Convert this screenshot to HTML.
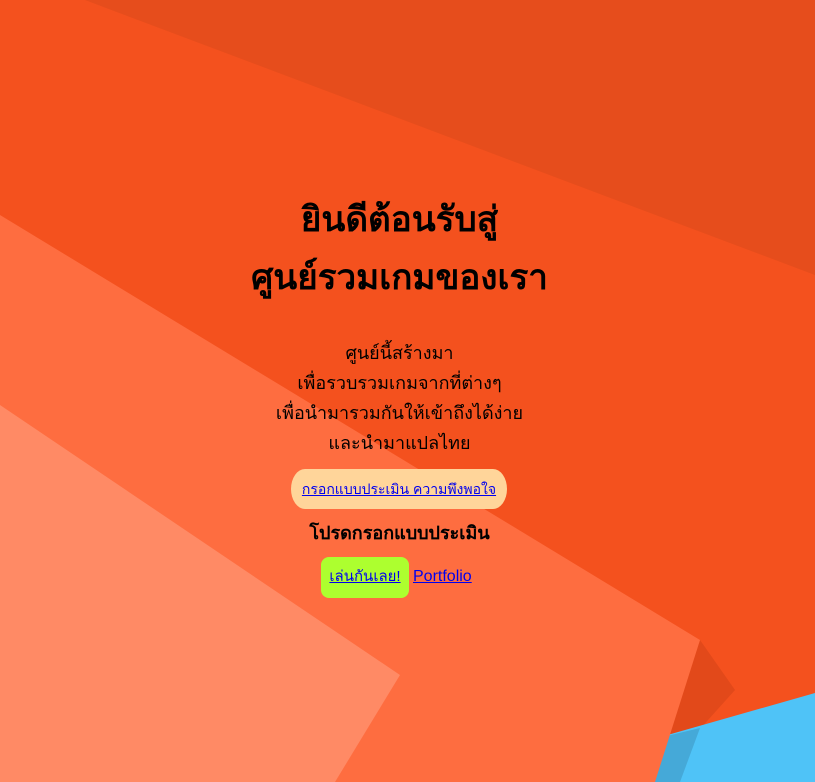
<!DOCTYPE html>
<html><head><meta charset="utf-8"><style>
html,body{margin:0;padding:0;width:815px;height:782px;overflow:hidden;font-family:"Liberation Sans","Noto Sans CJK SC",sans-serif;}
svg.bg{position:absolute;left:0;top:0}
.c{position:absolute;left:0;width:799px;text-align:center;color:#000}
h1{margin:0;font-size:35px;font-weight:bold;line-height:58px}
.p{font-size:18px;line-height:30px}
a{color:#00e;text-decoration:underline}
.b1{position:absolute;left:291px;top:469px;width:216px;height:40px;background:#ffd59a;border-radius:14px/20px;font-size:14px;line-height:40px;text-align:center}
.b2{position:absolute;left:321px;top:557px;width:88px;height:41px;background:#adff2f;border-radius:8px;font-size:15px;line-height:40px;text-align:center}
</style></head><body>
<svg class="bg" width="815" height="782">
<rect width="815" height="782" fill="#f4511e"/>
<polygon points="85,0 815,0 815,275" fill="#e64d1c"/>
<polygon points="700,640 735,690 690,740 660,760" fill="#e2491a"/>
<polygon points="650,740 815,693 815,782 640,782" fill="#4fc3f7"/>
<polygon points="650,740 700,728 680,782 640,782" fill="#45a9d8"/>
<polygon points="0,215 700,640 655,782 0,782" fill="#fe6d40"/>
<polygon points="0,405 400,675 335,782 0,782" fill="#ff8a65"/>
</svg>
<div class="c" style="top:191px"><h1>ยินดีต้อนรับสู่<br>ศูนย์รวมเกมของเรา</h1></div>
<div class="c p" style="top:338px">ศูนย์นี้สร้างมา<br>เพื่อรวบรวมเกมจากที่ต่างๆ<br>เพื่อนำมารวมกันให้เข้าถึงได้ง่าย<br>และนำมาแปลไทย</div>
<div class="b1"><a>กรอกแบบประเมิน ความพึงพอใจ</a></div>
<div class="c" style="top:519px;font-size:18px;line-height:28px;font-weight:bold">โปรดกรอกแบบประเมิน</div>
<div class="b2"><a>เล่นกันเลย!</a></div>
<a style="position:absolute;left:413px;top:566px;font-size:16px;line-height:22px">Portfolio</a>
</body></html>
